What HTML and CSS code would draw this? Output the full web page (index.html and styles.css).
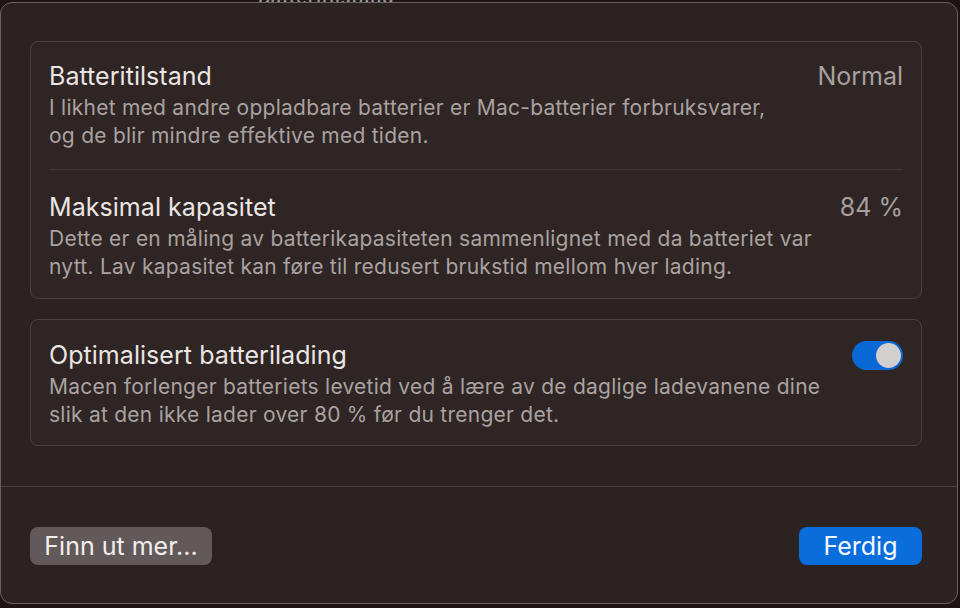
FILE: index.html
```html
<!DOCTYPE html>
<html lang="no">
<head>
<meta charset="utf-8">
<title>Batteritilstand</title>
<link rel="stylesheet" href="styles.css">
</head>
<body>
<div class="behind">Batteritilstand</div>
<div class="sheet">
  <div class="content">
    <section class="card">
      <div class="row row-first">
        <div class="text">
          <div class="title">Batteritilstand</div>
          <div class="desc">I likhet med andre oppladbare batterier er Mac-batterier forbruksvarer,<br>og de blir mindre effektive med tiden.</div>
        </div>
        <div class="value">Normal</div>
      </div>
      <div class="sep"></div>
      <div class="row row-second">
        <div class="text">
          <div class="title">Maksimal kapasitet</div>
          <div class="desc">Dette er en måling av batterikapasiteten sammenlignet med da batteriet var<br>nytt. Lav kapasitet kan føre til redusert brukstid mellom hver lading.</div>
        </div>
        <div class="value">84 %</div>
      </div>
    </section>
    <section class="card">
      <div class="row row-third">
        <div class="text">
          <div class="title">Optimalisert batterilading</div>
          <div class="desc">Macen forlenger batteriets levetid ved å lære av de daglige ladevanene dine<br>slik at den ikke lader over 80 % før du trenger det.</div>
        </div>
        <div class="toggle"><span class="knob"></span></div>
      </div>
    </section>
  </div>
  <div class="footer">
    <button class="btn btn-secondary">Finn ut mer...</button>
    <button class="btn btn-primary">Ferdig</button>
  </div>
</div>
</body>
</html>
```
FILE: styles.css
```css
* { box-sizing: border-box; }
html, body {
  margin: 0;
  padding: 0;
  width: 960px;
  height: 608px;
  overflow: hidden;
  background: #1c1415;
  font-family: Inter, "Noto Sans", sans-serif;
}
.behind {
  position: absolute;
  left: 258px;
  top: -13px;
  font-size: 18px;
  font-weight: 600;
  color: #9a9292;
  letter-spacing: 1px;
}
.sheet {
  position: relative;
  z-index: 1;
  margin-top: 2px;
  width: 958px;
  height: 602px;
  background: #2b2221;
  border: 1px solid #6a6262;
  border-radius: 12px;
  display: flex;
  flex-direction: column;
}
.content {
  padding: 38px 35px 0 29px;
  display: flex;
  flex-direction: column;
  gap: 20px;
  height: 483px;
}
.card {
  background: #2e2524;
  border: 1px solid #4a4241;
  border-radius: 8px;
  padding: 0 18px 0 18px;
}
.row {
  display: flex;
  justify-content: space-between;
  align-items: flex-start;
}
.row-first {
  padding: 20px 0 19px;
}
.row-second {
  padding: 23px 0 17px;
}
.row-third {
  padding: 21px 0 16px;
}
.sep {
  height: 1px;
  background: #433b3a;
}
.title {
  font-size: 25px;
  line-height: 28px;
  color: #ebe5e4;
  letter-spacing: 0.05px;
}
.desc {
  margin-top: 4px;
  font-size: 21px;
  line-height: 28px;
  color: #aaa2a1;
  letter-spacing: 0.25px;
}
.value {
  font-size: 25px;
  line-height: 28px;
  color: #a8a09f;
  letter-spacing: 0;
}
.toggle {
  width: 51px;
  height: 29px;
  margin-top: 0;
  border-radius: 15px;
  background: #0a68d6;
  position: relative;
  flex: none;
}
.knob {
  position: absolute;
  right: 2px;
  top: 2px;
  width: 25px;
  height: 25px;
  border-radius: 50%;
  background: #d2cfcf;
}
.footer {
  border-top: 1px solid #4a4242;
  flex: 1;
  display: flex;
  justify-content: space-between;
  align-items: flex-start;
  padding: 40px 35px 0 29px;
}
.btn {
  font-family: Inter, "Noto Sans", sans-serif;
  font-size: 25px;
  height: 38px;
  border: none;
  border-radius: 8px;
  padding: 0;
  line-height: 37px;
  text-align: center;
}
.btn-secondary {
  width: 182px;
  background: #625a5a;
  color: #f2eeee;
}
.btn-primary {
  width: 123px;
  background: #0a6ddc;
  color: #f6f9ff;
}
```
